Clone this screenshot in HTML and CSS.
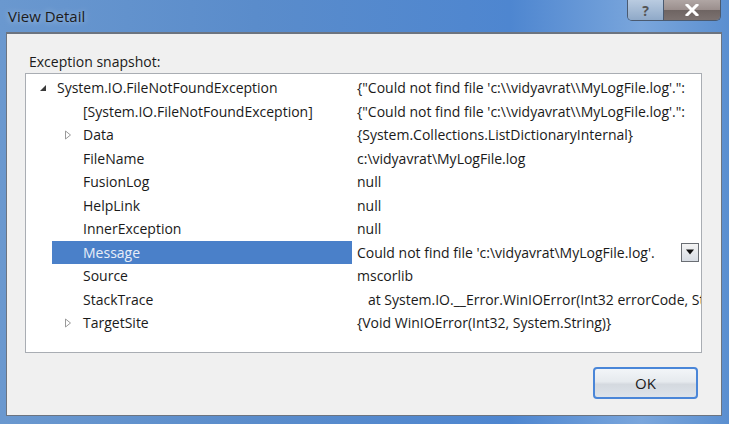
FILE: index.html
```html
<!DOCTYPE html>
<html>
<head>
<meta charset="utf-8">
<link rel="stylesheet" href="styles.css">
</head>
<body>
<div class="window">
  <div class="titlebar">
    <span class="title">View Detail</span>
    <div class="caption-btns">
      <div class="cbtn help">?</div>
      <div class="cbtn close">
        <svg width="14" height="12" viewBox="0 0 14 12"><path d="M2 1 L12 11 M12 1 L2 11" stroke="#fff" stroke-width="3" stroke-linecap="square"/></svg>
      </div>
    </div>
  </div>
  <div class="client">
    <div class="label">Exception snapshot:</div>
    <div class="listbox">
      <div class="row">
        <div class="name root"><span class="exp expanded"><svg width="8" height="8" viewBox="0 0 8 8"><path d="M7 1 L7 7 L1 7 Z" fill="#3a3a3a"/></svg></span>System.IO.FileNotFoundException</div>
        <div class="value">{"Could not find file 'c:\\vidyavrat\\MyLogFile.log'.":</div>
      </div>
      <div class="row">
        <div class="name child">[System.IO.FileNotFoundException]</div>
        <div class="value">{"Could not find file 'c:\\vidyavrat\\MyLogFile.log'.":</div>
      </div>
      <div class="row">
        <div class="name child"><span class="exp collapsed"><svg width="8" height="10" viewBox="0 0 8 10"><path d="M1.5 1 L6.5 5 L1.5 9 Z" fill="none" stroke="#9a9a9a" stroke-width="1"/></svg></span>Data</div>
        <div class="value">{System.Collections.ListDictionaryInternal}</div>
      </div>
      <div class="row">
        <div class="name child">FileName</div>
        <div class="value">c:\vidyavrat\MyLogFile.log</div>
      </div>
      <div class="row">
        <div class="name child">FusionLog</div>
        <div class="value">null</div>
      </div>
      <div class="row">
        <div class="name child">HelpLink</div>
        <div class="value">null</div>
      </div>
      <div class="row">
        <div class="name child">InnerException</div>
        <div class="value">null</div>
      </div>
      <div class="row selected">
        <div class="name child">Message</div>
        <div class="value">Could not find file 'c:\vidyavrat\MyLogFile.log'.<span class="dropbtn"><svg width="10" height="6" viewBox="0 0 10 6"><path d="M1 0.5 L9 0.5 L5 5.5 Z" fill="#111"/></svg></span></div>
      </div>
      <div class="row">
        <div class="name child">Source</div>
        <div class="value">mscorlib</div>
      </div>
      <div class="row">
        <div class="name child">StackTrace</div>
        <div class="value"><span class="clip">&nbsp;&nbsp;&nbsp;at System.IO.__Error.WinIOError(Int32 errorCode, St</span></div>
      </div>
      <div class="row">
        <div class="name child"><span class="exp collapsed"><svg width="8" height="10" viewBox="0 0 8 10"><path d="M1.5 1 L6.5 5 L1.5 9 Z" fill="none" stroke="#9a9a9a" stroke-width="1"/></svg></span>TargetSite</div>
        <div class="value">{Void WinIOError(Int32, System.String)}</div>
      </div>
    </div>
    <div class="footer">
      <button class="ok">OK</button>
    </div>
  </div>
</div>
</body>
</html>
```
FILE: styles.css
```css
html, body {
  margin: 0;
  padding: 0;
}
body {
  width: 729px;
  height: 424px;
  overflow: hidden;
  font-family: "Open Sans", "Noto Sans", "Liberation Sans", sans-serif;
  color: #1a1a1a;
}
.window {
  width: 729px;
  height: 424px;
  box-sizing: border-box;
  background: linear-gradient(90deg, #6a98cf 0%, #5a8ccb 35%, #4e86d0 70%, #7aa6dc 88%, #5b8fd0 100%);
  display: flex;
  flex-direction: column;
  padding: 0 7px 8px 6px;
}
.titlebar {
  height: 32px;
  flex: none;
  display: flex;
  align-items: flex-start;
  justify-content: space-between;
}
.title {
  margin: 6px 0 0 2px;
  font-size: 15px;
  color: #1c1c1c;
  text-shadow: 0 0 6px rgba(255,255,255,0.5);
}
.caption-btns {
  display: flex;
  margin-right: 1px;
  border: 1px solid #4a5a70;
  border-top: none;
  border-radius: 0 0 5px 5px;
  overflow: hidden;
  height: 20px;
}
.cbtn {
  display: flex;
  align-items: center;
  justify-content: center;
  height: 20px;
}
.help {
  width: 35px;
  background: linear-gradient(#b9cbe0, #8fa9c8);
  color: #555;
  font-weight: bold;
  font-size: 14px;
  border-right: 1px solid #4a5a70;
}
.close {
  width: 56px;
  background: linear-gradient(#b0a6a4 0%, #9a8e8c 50%, #6e6462 51%, #7c7270 100%);
}
.client {
  flex: 1;
  background: #f0f0f0;
  border: 1px solid #6c7480;
  border-top: 2px solid #6c7480;
  display: flex;
  flex-direction: column;
  padding: 0 19px 0 18px;
}
.label {
  font-size: 14px;
  margin: 17px 0 0 4px;
  height: 22px;
  line-height: 22px;
}
.listbox {
  height: 280px;
  background: #fff;
  border: 1px solid #a9adb3;
  box-sizing: border-box;
  padding: 2px 0 0 26px;
}
.row {
  height: 23.5px;
  display: flex;
  align-items: center;
  font-size: 14px;
  white-space: nowrap;
}
.name {
  width: 300px;
  height: 100%;
  display: flex;
  align-items: center;
  box-sizing: border-box;
  position: relative;
}
.name.root { padding-left: 5px; }
.name.child { padding-left: 31px; }
.exp {
  position: absolute;
  display: flex;
}
.root .exp { left: -13px; top: 8px; }
.child .exp { left: 12px; top: 7px; }
.value {
  padding-left: 5px;
  flex: 1;
  min-width: 0;
  display: flex;
  align-items: center;
  overflow: hidden;
  height: 100%;
}
.clip {
  display: block;
  width: 100%;
  overflow: hidden;
  white-space: nowrap;
}
.selected .name {
  background: #4a80c9;
  color: #e8eef8;
}
.dropbtn {
  margin-left: auto;
  margin-right: 2px;
  width: 16px;
  height: 17px;
  border: 1px solid #6a6e74;
  background: linear-gradient(#f4f4f4, #d8dde4);
  display: flex;
  align-items: center;
  justify-content: center;
}
.footer {
  flex: 1;
  display: flex;
  justify-content: flex-end;
  align-items: flex-start;
  padding-top: 14px;
}
.ok {
  width: 105px;
  height: 32px;
  margin-right: 4px;
  border: 2px solid #4a86d8;
  border-radius: 4px;
  background: linear-gradient(#f2f5f8 0%, #e6eaee 45%, #d4d9df 55%, #dde3ea 100%);
  font-family: "Open Sans", "Noto Sans", sans-serif;
  font-size: 15px;
  color: #1a1a1a;
  padding: 0;
}
```
